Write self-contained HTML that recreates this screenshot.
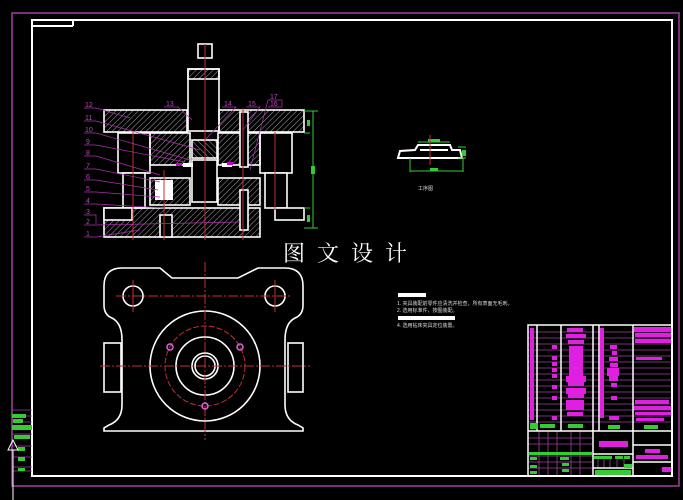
<!DOCTYPE html>
<html><head><meta charset="utf-8"><style>
html,body{margin:0;padding:0;background:#000;}
svg{display:block}
</style></head><body>
<svg width="683" height="500" viewBox="0 0 683 500" xmlns="http://www.w3.org/2000/svg">
<defs>
<pattern id="h" patternUnits="userSpaceOnUse" width="4" height="4" patternTransform="rotate(45)">
<line x1="0" y1="0" x2="0" y2="4" stroke="#ccc" stroke-width="0.8"/>
</pattern>
<pattern id="h2" patternUnits="userSpaceOnUse" width="4" height="4" patternTransform="rotate(-45)">
<line x1="0" y1="0" x2="0" y2="4" stroke="#ccc" stroke-width="0.8"/>
</pattern>
</defs>
<rect width="683" height="500" fill="#000"/>
<rect x="12" y="13" width="667" height="473" fill="none" stroke="#a040a0" stroke-width="1.5"/>
<rect x="32" y="20" width="640" height="456" fill="none" stroke="#fff" stroke-width="2"/>
<line x1="32" y1="26" x2="73" y2="26" stroke="#fff" stroke-width="2"/>
<line x1="73" y1="20" x2="73" y2="26" stroke="#fff" stroke-width="2"/>

<g stroke="#a040a0" stroke-width="0.8">
<line x1="12" y1="410" x2="32" y2="410"/><line x1="12" y1="416" x2="32" y2="416"/>
<line x1="12" y1="422" x2="32" y2="422"/><line x1="12" y1="434" x2="32" y2="434"/>
<line x1="12" y1="446" x2="32" y2="446"/><line x1="12" y1="457" x2="32" y2="457"/>
<line x1="12" y1="467" x2="32" y2="467"/><line x1="12" y1="471" x2="32" y2="471"/>
</g>
<g fill="#3c3">
<rect x="12" y="414" width="14" height="4"/><rect x="13" y="419" width="10" height="4"/>
<rect x="12" y="425" width="20" height="5"/><rect x="14" y="435" width="16" height="4"/>
<rect x="18" y="447" width="7" height="4"/><rect x="18" y="457" width="7" height="4"/><rect x="18" y="468" width="7" height="3"/>
</g>
<path d="M8 450 L13 440 L18 450 Z M13 450 L13 500" stroke="#fff" fill="none" stroke-width="1"/>

<g stroke="#fff" stroke-width="1.6">
<rect x="198" y="44" width="14" height="14" fill="#000"/>
<rect x="188" y="69" width="31" height="62" fill="#000"/>
<rect x="188" y="69" width="31" height="10" fill="url(#h)"/>
<rect x="104" y="110" width="83" height="22" fill="url(#h)"/>
<rect x="219" y="110" width="85" height="22" fill="url(#h)"/>
<rect x="118" y="133" width="32" height="40" fill="#000"/>
<rect x="123" y="173" width="22" height="35" fill="#000"/>
<rect x="260" y="133" width="32" height="40" fill="#000"/>
<rect x="265" y="173" width="22" height="35" fill="#000"/>
<rect x="150" y="133" width="40" height="32" fill="url(#h)"/>
<rect x="218" y="133" width="42" height="32" fill="url(#h)"/>
<rect x="192" y="140" width="25" height="18" fill="url(#h2)"/>
<rect x="150" y="178" width="40" height="27" fill="url(#h)"/>
<rect x="218" y="178" width="42" height="27" fill="url(#h)"/>
<rect x="192" y="160" width="25" height="42" fill="#000"/>
<rect x="104" y="208" width="156" height="29" fill="url(#h)"/>
<rect x="104" y="208" width="28" height="12" fill="#000"/>
<rect x="275" y="208" width="29" height="12" fill="#000"/>
<rect x="160" y="215" width="12" height="22" fill="#000"/>
<rect x="240" y="190" width="8" height="40" fill="#000"/>
<rect x="240" y="112" width="8" height="55" fill="#000"/>
</g>
<g fill="#fff">
<rect x="155" y="180" width="18" height="20"/>
<rect x="183" y="163" width="10" height="4"/><rect x="222" y="163" width="10" height="4"/>
</g>
<g fill="#c0c">
<rect x="176" y="163" width="6" height="3"/><rect x="227" y="162" width="6" height="3"/>
</g>
<g stroke="#c03030" stroke-width="1">
<line x1="205" y1="44" x2="205" y2="240"/>
<line x1="133" y1="132" x2="133" y2="240"/>
<line x1="275" y1="132" x2="275" y2="210"/>
<line x1="243" y1="108" x2="243" y2="240"/>
<line x1="164" y1="170" x2="164" y2="240"/>
</g>
<g stroke="#3c3" stroke-width="1" fill="none">
<line x1="313" y1="111" x2="313" y2="228"/>
<line x1="304" y1="111" x2="318" y2="111"/><line x1="304" y1="133" x2="310" y2="133"/>
<line x1="304" y1="208" x2="310" y2="208"/><line x1="304" y1="228" x2="318" y2="228"/>
</g>
<g fill="#3c3"><rect x="307" y="120" width="3" height="6"/><rect x="311" y="166" width="4" height="8"/><rect x="307" y="215" width="3" height="7"/></g>
<g fill="#c040c0" font-family="Liberation Sans, sans-serif" font-size="7">
<text x="85" y="107">12</text><text x="85" y="120">11</text><text x="85" y="132">10</text>
<text x="86" y="144">9</text><text x="86" y="155">8</text><text x="86" y="168">7</text>
<text x="86" y="179">6</text><text x="86" y="191">5</text><text x="86" y="203">4</text>
<text x="86" y="214">3</text><text x="86" y="224">2</text><text x="86" y="236">1</text>
<text x="166" y="106">13</text><text x="224" y="106">14</text><text x="248" y="106">15</text>
<text x="270" y="99">17</text><text x="270" y="106">16</text>
</g>
<g stroke="#b030b0" stroke-width="0.7" fill="none">
<path d="M84 108 L96 108 L130 118"/><path d="M84 121 L96 121 L200 150"/>
<path d="M84 133 L96 133 L190 160"/><path d="M84 145 L96 145 L185 162"/>
<path d="M84 156 L96 156 L160 175"/><path d="M84 169 L96 169 L160 182"/>
<path d="M84 180 L96 180 L158 190"/><path d="M84 192 L96 192 L160 197"/>
<path d="M84 204 L96 204 L165 208"/><path d="M84 215 L96 215 L96 224"/>
<path d="M84 225 L96 225 L240 222"/><path d="M84 237 L96 237 L140 230"/>
<path d="M164 107 L178 107 L192 120"/><path d="M222 107 L236 107 L205 140"/>
<path d="M246 107 L260 107 L243 130"/><path d="M268 107 L282 107 L282 100 L268 100 L250 170"/>
</g>

<text x="283" y="261" fill="#fff" font-family="Liberation Serif, 'Noto Serif CJK SC', serif" font-size="22" letter-spacing="12">图文设计</text>

<g stroke="#fff" stroke-width="1.6" fill="none">
<path d="M122 268 L160 268 L172 278 L238 278 L258 268 L285 268 Q303 268 303 286 L303 305 Q303 315 295 318 Q285 323 285 340 L285 405 Q285 420 298 425 L303 428 L303 431 L104 431 L104 428 L109 425 Q122 420 122 405 L122 340 Q122 323 112 318 Q104 315 104 305 L104 286 Q104 268 122 268 Z"/>
<rect x="104" y="343" width="17" height="49"/>
<rect x="288" y="343" width="15" height="49"/>
<circle cx="133" cy="296" r="10"/><circle cx="275" cy="296" r="10"/>
<circle cx="205" cy="366" r="55"/>
<circle cx="205" cy="366" r="29"/>
<circle cx="205" cy="366" r="13"/><circle cx="205" cy="366" r="10"/>
</g>
<g stroke="#c03030" stroke-width="1" fill="none">
<circle cx="205" cy="366" r="40" stroke-dasharray="6 2"/>
<line x1="205" y1="262" x2="205" y2="440" stroke-dasharray="10 2 2 2"/>
<line x1="100" y1="366" x2="310" y2="366" stroke-dasharray="10 2 2 2"/>
<line x1="116" y1="296" x2="292" y2="296" stroke-dasharray="10 2 2 2"/>
<line x1="133" y1="280" x2="133" y2="312"/><line x1="275" y1="280" x2="275" y2="312"/>
</g>
<g stroke="#e060e0" stroke-width="1.5" fill="none">
<circle cx="170" cy="347" r="3"/><circle cx="240" cy="347" r="3"/><circle cx="205" cy="406" r="3"/>
</g>

<g stroke="#fff" stroke-width="2" fill="none">
<path d="M398 158 L400 151 L415 150 L418 145 L450 145 L452 150 L460 150 L462 158 Z"/>
<line x1="398" y1="158" x2="462" y2="158"/>
<line x1="420" y1="150" x2="448" y2="150"/>
</g>
<g stroke="#3c3" stroke-width="1" fill="none">
<line x1="410" y1="171" x2="463" y2="171"/><line x1="410" y1="158" x2="410" y2="172"/><line x1="463" y1="158" x2="463" y2="172"/>
<line x1="418" y1="142" x2="450" y2="142"/><line x1="458" y1="147" x2="466" y2="147"/><line x1="458" y1="158" x2="466" y2="158"/>
</g>
<rect x="428" y="139" width="12" height="3" fill="#3c3"/>
<rect x="430" y="168" width="8" height="3" fill="#3c3"/>
<rect x="462" y="150" width="4" height="6" fill="#3c3"/>
<line x1="430" y1="135" x2="430" y2="165" stroke="#c03030" stroke-width="1"/>
<text x="418" y="190" fill="#ddd" font-family="Liberation Sans, 'Noto Sans CJK SC', sans-serif" font-size="5">工序图</text>

<rect x="398" y="293" width="28" height="4" fill="#fff"/>
<text x="397" y="305" fill="#ddd" font-family="Liberation Sans, 'Noto Sans CJK SC', sans-serif" font-size="5">1. 夹具装配前零件应清洗并检查，所有表面无毛刺。</text>
<text x="397" y="312" fill="#ddd" font-family="Liberation Sans, 'Noto Sans CJK SC', sans-serif" font-size="5">2. 选用标准件，按图装配。</text>
<rect x="398" y="316" width="57" height="4" fill="#fff"/>
<text x="397" y="327" fill="#ddd" font-family="Liberation Sans, 'Noto Sans CJK SC', sans-serif" font-size="5">4. 选用钻床夹具定位装置。</text>

<g stroke="#a040a0" stroke-width="0.8">
<line x1="528" y1="332" x2="672" y2="332"/><line x1="528" y1="338" x2="672" y2="338"/>
<line x1="528" y1="344" x2="672" y2="344"/><line x1="528" y1="350" x2="672" y2="350"/>
<line x1="528" y1="356" x2="672" y2="356"/><line x1="528" y1="362" x2="672" y2="362"/>
<line x1="528" y1="368" x2="672" y2="368"/><line x1="528" y1="374" x2="672" y2="374"/>
<line x1="528" y1="380" x2="672" y2="380"/><line x1="528" y1="386" x2="672" y2="386"/>
<line x1="528" y1="392" x2="672" y2="392"/><line x1="528" y1="398" x2="672" y2="398"/>
<line x1="528" y1="404" x2="672" y2="404"/><line x1="528" y1="410" x2="672" y2="410"/>
<line x1="528" y1="416" x2="672" y2="416"/><line x1="528" y1="422" x2="672" y2="422"/>
<line x1="528" y1="438" x2="593" y2="438"/><line x1="528" y1="444" x2="593" y2="444"/>
<line x1="528" y1="456" x2="593" y2="456"/><line x1="528" y1="462" x2="593" y2="462"/>
<line x1="528" y1="468" x2="593" y2="468"/>
<line x1="539" y1="431" x2="539" y2="476"/><line x1="548" y1="431" x2="548" y2="476"/>
<line x1="557" y1="431" x2="557" y2="476"/><line x1="571" y1="431" x2="571" y2="476"/>
<line x1="580" y1="431" x2="580" y2="476"/>
<line x1="598" y1="458" x2="598" y2="468"/><line x1="604" y1="458" x2="604" y2="468"/>
<line x1="610" y1="458" x2="610" y2="468"/><line x1="617" y1="458" x2="617" y2="468"/><line x1="624" y1="458" x2="624" y2="468"/>
</g>
<g stroke="#fff" stroke-width="1.5" fill="none">
<rect x="528" y="325" width="144" height="151"/>
<line x1="537" y1="325" x2="537" y2="431"/><line x1="561" y1="325" x2="561" y2="431"/>
<line x1="593" y1="325" x2="593" y2="476"/><line x1="599" y1="325" x2="599" y2="431"/>
<line x1="633" y1="325" x2="633" y2="476"/>
<line x1="528" y1="431" x2="672" y2="431"/>
<line x1="593" y1="454" x2="633" y2="454"/><line x1="593" y1="468" x2="633" y2="468"/>
<line x1="633" y1="445" x2="672" y2="445"/><line x1="633" y1="462" x2="672" y2="462"/>
</g>
<g fill="#e020e0">
<rect x="530" y="328" width="4" height="92"/>
<rect x="567" y="328" width="16" height="4"/><rect x="566" y="334" width="20" height="4"/>
<rect x="568" y="340" width="16" height="4"/><rect x="569" y="346" width="14" height="30"/>
<rect x="566" y="376" width="20" height="6"/><rect x="568" y="382" width="16" height="4"/>
<rect x="566" y="388" width="20" height="6"/><rect x="568" y="394" width="16" height="4"/>
<rect x="566" y="400" width="18" height="10"/><rect x="567" y="412" width="16" height="4"/>
<rect x="552" y="345" width="5" height="4"/><rect x="552" y="356" width="5" height="4"/>
<rect x="552" y="362" width="5" height="4"/><rect x="552" y="368" width="5" height="4"/>
<rect x="552" y="374" width="5" height="4"/><rect x="552" y="385" width="5" height="4"/>
<rect x="552" y="396" width="5" height="4"/><rect x="552" y="416" width="5" height="4"/>
<rect x="600" y="328" width="4" height="90"/>
<rect x="610" y="345" width="7" height="4"/><rect x="612" y="351" width="5" height="4"/>
<rect x="609" y="357" width="9" height="4"/><rect x="610" y="363" width="8" height="4"/>
<rect x="607" y="368" width="12" height="8"/><rect x="609" y="376" width="9" height="5"/>
<rect x="611" y="383" width="6" height="4"/><rect x="611" y="396" width="6" height="4"/>
<rect x="609" y="416" width="10" height="4"/>
<rect x="634" y="327" width="37" height="5"/><rect x="635" y="333" width="36" height="4"/>
<rect x="635" y="339" width="36" height="4"/><rect x="636" y="357" width="26" height="3"/>
<rect x="635" y="400" width="34" height="4"/><rect x="634" y="406" width="37" height="4"/>
<rect x="635" y="412" width="36" height="3"/><rect x="636" y="418" width="28" height="3"/>
<rect x="599" y="441" width="29" height="6"/>
<rect x="645" y="449" width="15" height="4"/><rect x="636" y="455" width="32" height="4"/>
<rect x="662" y="467" width="9" height="5"/>
</g>
<g fill="#3c3">
<rect x="530" y="423" width="8" height="6"/><rect x="540" y="424" width="15" height="4"/>
<rect x="568" y="424" width="15" height="4"/><rect x="608" y="425" width="12" height="4"/>
<rect x="644" y="425" width="14" height="4"/>
<rect x="529" y="452" width="63" height="3"/>
<rect x="530" y="457" width="7" height="3"/><rect x="560" y="457" width="9" height="3"/>
<rect x="530" y="465" width="7" height="3"/><rect x="562" y="463" width="7" height="3"/>
<rect x="530" y="471" width="7" height="3"/><rect x="562" y="469" width="7" height="3"/>
<rect x="594" y="456" width="18" height="3"/><rect x="615" y="456" width="8" height="3"/><rect x="624" y="456" width="6" height="3"/>
<rect x="624" y="464" width="8" height="4"/><rect x="595" y="470" width="36" height="5"/>
</g>
</svg>
</body></html>
